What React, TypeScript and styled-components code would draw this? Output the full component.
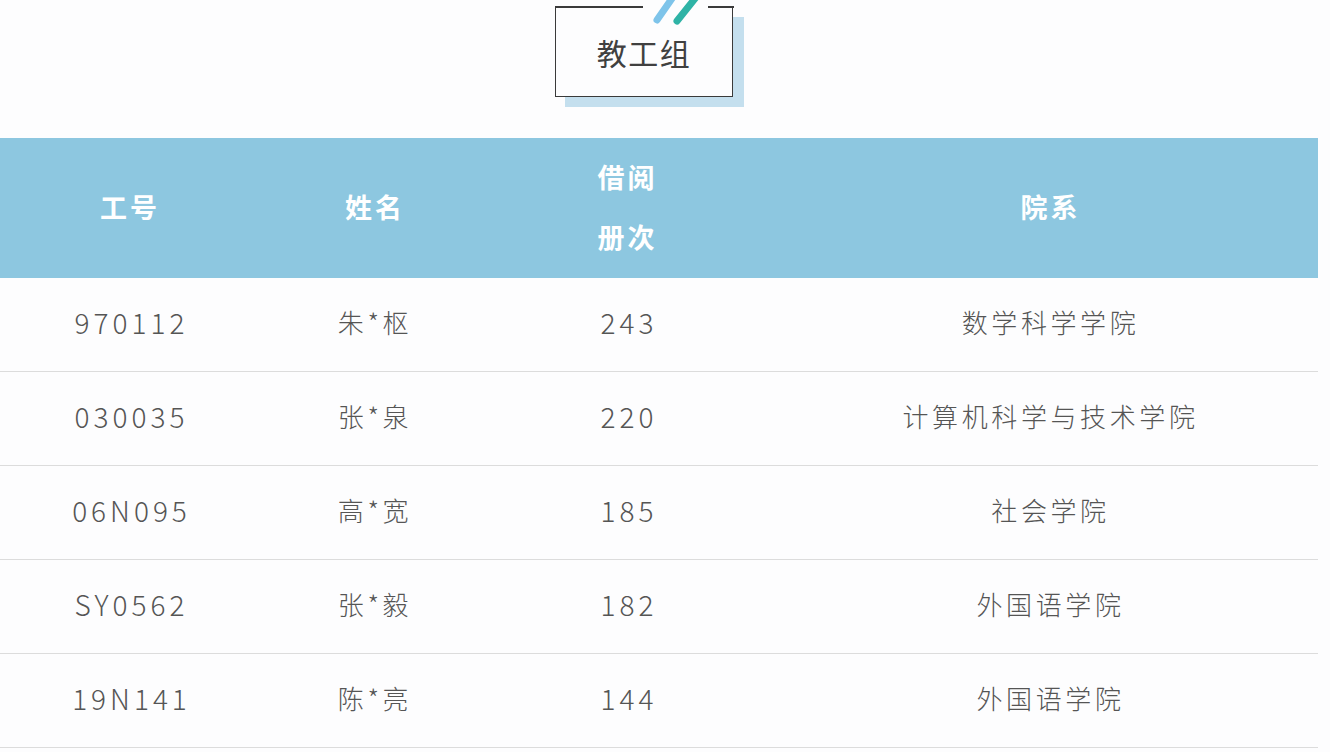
import React from "react";
import styled, { createGlobalStyle } from "styled-components";

const Global = createGlobalStyle`
  html, body { margin: 0; padding: 0; background: #fdfdfe; }
  body { font-family: "Noto Sans CJK SC", "Noto Sans", sans-serif; }
`;

const Page = styled.div`
  width: 1330px;
  height: 752px;
  overflow: hidden;
  background: #fdfdfe;
  display: flex;
  flex-direction: column;
`;

const TitleArea = styled.div`
  height: 138px;
  display: flex;
  justify-content: center;
  padding-top: 6px;
  box-sizing: border-box;
  padding-right: 42px;
`;

const TitleWrap = styled.div`
  position: relative;
  width: 178px;
  height: 91px;
`;

const TitleShadow = styled.div`
  position: absolute;
  left: 10px;
  top: 11px;
  width: 179px;
  height: 90px;
  background: #c4dfee;
`;

const TitleBox = styled.div`
  position: relative;
  box-sizing: border-box;
  width: 178px;
  height: 91px;
  border: 1.5px solid #3a3a3a;
  border-top: none;
  background: #fdfdfe;
  display: flex;
  align-items: center;
  justify-content: center;
  font-size: 30px;
  font-weight: 400;
  color: #404040;
  letter-spacing: 1.5px;
  padding-top: 2px;
`;

const TopLine = styled.div<{ $left: number; $width: number }>`
  position: absolute;
  top: 0;
  left: ${(p) => p.$left}px;
  width: ${(p) => p.$width}px;
  height: 1.5px;
  background: #3a3a3a;
`;

const Slashes = styled.svg`
  position: absolute;
  left: 95px;
  top: -6px;
`;

const Table = styled.div`
  width: 1318px;
  display: flex;
  flex-direction: column;
`;

const cols = "260px 230px 275px 553px";

const HeadRow = styled.div`
  display: grid;
  grid-template-columns: ${cols};
  height: 140px;
  background: #8dc7e0;
  align-items: center;
`;

const HeadCell = styled.div<{ $shift?: number }>`
  text-align: center;
  color: #ffffff;
  font-weight: 700;
  font-size: 27px;
  letter-spacing: 3px;
  line-height: 60px;
  padding-left: ${(p) => p.$shift ?? 0}px;
  padding-bottom: 3px;
`;

const Row = styled.div`
  display: grid;
  grid-template-columns: ${cols};
  height: 94px;
  align-items: center;
  border-bottom: 1.5px solid #dcdcdc;
  box-sizing: border-box;
  background: #fdfdfe;
`;

const Cell = styled.div<{ $shift?: number; $num?: boolean }>`
  text-align: center;
  color: #555555;
  font-size: ${(p) => (p.$num ? 28 : 26)}px;
  font-weight: 300;
  letter-spacing: ${(p) => (p.$num ? 4 : 3.6)}px;
  padding-left: ${(p) => (p.$shift ?? 0) + (p.$num ? 3 : 0)}px;
  padding-bottom: 6px;
`;

const rows = [
  ["970112", "朱*枢", "243", "数学科学学院"],
  ["030035", "张*泉", "220", "计算机科学与技术学院"],
  ["06N095", "高*宽", "185", "社会学院"],
  ["SY0562", "张*毅", "182", "外国语学院"],
  ["19N141", "陈*亮", "144", "外国语学院"],
];

export default function App() {
  return (
    <Page>
      <Global />
      <TitleArea>
        <TitleWrap>
          <TitleShadow />
          <TitleBox>
            <TopLine $left={0} $width={87} />
            <TopLine $left={152} $width={26} />
            教工组
          </TitleBox>
          <Slashes width="60" height="32" viewBox="0 0 60 32">
            <line x1="7" y1="20" x2="23" y2="-3" stroke="#7ec4ea" strokeWidth="7" strokeLinecap="round" />
            <line x1="27" y1="21" x2="47" y2="-4" stroke="#2fb3a6" strokeWidth="7" strokeLinecap="round" />
          </Slashes>
        </TitleWrap>
      </TitleArea>
      <Table>
        <HeadRow>
          <HeadCell>工号</HeadCell>
          <HeadCell>姓名</HeadCell>
          <HeadCell>
            借阅
            <br />
            册次
          </HeadCell>
          <HeadCell $shift={18}>院系</HeadCell>
        </HeadRow>
        {rows.map((r) => (
          <Row key={r[0]}>
            <Cell $num>{r[0]}</Cell>
            <Cell>{r[1]}</Cell>
            <Cell $num>{r[2]}</Cell>
            <Cell $shift={18}>{r[3]}</Cell>
          </Row>
        ))}
      </Table>
    </Page>
  );
}
